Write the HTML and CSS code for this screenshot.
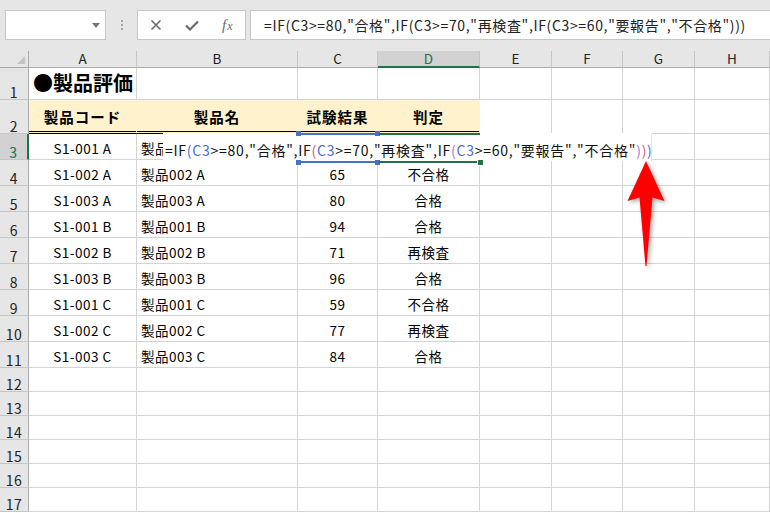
FILE: index.html
```html
<!DOCTYPE html>
<html lang="ja">
<head>
<meta charset="utf-8">
<title>製品評価</title>
<link rel="stylesheet" href="styles.css">
</head>
<body>
<div class="app">
  <div class="toolbar">
    <div class="namebox"><span class="dd"></span></div>
    <div class="grip"><i></i><i></i><i></i></div>
    <div class="fxbox">
      <svg class="ic-x" width="12" height="12" viewBox="0 0 12 12"><path d="M1.5 1.5 L10.5 10.5 M10.5 1.5 L1.5 10.5" stroke="#6b6b6b" stroke-width="1.6" fill="none"/></svg>
      <svg class="ic-ok" width="14" height="11" viewBox="0 0 14 11"><path d="M1 5.5 L5 9.5 L13 1.5" stroke="#6b6b6b" stroke-width="2.2" fill="none"/></svg>
      <span class="fx"><i>f</i><i class="fxx">x</i></span>
    </div>
    <div class="formula">=IF(C3&gt;=80,"合格",IF(C3&gt;=70,"再検査",IF(C3&gt;=60,"要報告","不合格")))</div>
  </div>

  <div class="sheet">
    <div class="corner"><span class="tri"></span></div>
    <div class="ch">A</div><div class="ch">B</div><div class="ch">C</div><div class="ch sel">D</div><div class="ch">E</div><div class="ch">F</div><div class="ch">G</div><div class="ch">H</div>

    <div class="rh">1</div><div class="c title">●製品評価</div><div class="c"></div><div class="c"></div><div class="c"></div><div class="c"></div><div class="c"></div><div class="c"></div><div class="c"></div>

    <div class="rh">2</div><div class="c hd dbl">製品コード</div><div class="c hd dbl">製品名</div><div class="c hd dbl">試験結果</div><div class="c hd dbl">判定</div><div class="c"></div><div class="c"></div><div class="c"></div><div class="c"></div>

    <div class="rh sel">3</div><div class="c ctr">S1-001 A</div><div class="c clip">製品001 A</div><div class="c ctr"></div><div class="c ctr"></div><div class="c"></div><div class="c"></div><div class="c"></div><div class="c"></div>

    <div class="rh">4</div><div class="c ctr">S1-002 A</div><div class="c">製品002 A</div><div class="c ctr">65</div><div class="c ctr">不合格</div><div class="c"></div><div class="c"></div><div class="c"></div><div class="c"></div>
    <div class="rh">5</div><div class="c ctr">S1-003 A</div><div class="c">製品003 A</div><div class="c ctr">80</div><div class="c ctr">合格</div><div class="c"></div><div class="c"></div><div class="c"></div><div class="c"></div>
    <div class="rh">6</div><div class="c ctr">S1-001 B</div><div class="c">製品001 B</div><div class="c ctr">94</div><div class="c ctr">合格</div><div class="c"></div><div class="c"></div><div class="c"></div><div class="c"></div>
    <div class="rh">7</div><div class="c ctr">S1-002 B</div><div class="c">製品002 B</div><div class="c ctr">71</div><div class="c ctr">再検査</div><div class="c"></div><div class="c"></div><div class="c"></div><div class="c"></div>
    <div class="rh">8</div><div class="c ctr">S1-003 B</div><div class="c">製品003 B</div><div class="c ctr">96</div><div class="c ctr">合格</div><div class="c"></div><div class="c"></div><div class="c"></div><div class="c"></div>
    <div class="rh">9</div><div class="c ctr">S1-001 C</div><div class="c">製品001 C</div><div class="c ctr">59</div><div class="c ctr">不合格</div><div class="c"></div><div class="c"></div><div class="c"></div><div class="c"></div>
    <div class="rh">10</div><div class="c ctr">S1-002 C</div><div class="c">製品002 C</div><div class="c ctr">77</div><div class="c ctr">再検査</div><div class="c"></div><div class="c"></div><div class="c"></div><div class="c"></div>
    <div class="rh">11</div><div class="c ctr">S1-003 C</div><div class="c">製品003 C</div><div class="c ctr">84</div><div class="c ctr">合格</div><div class="c"></div><div class="c"></div><div class="c"></div><div class="c"></div>

    <div class="rh">12</div><div class="c"></div><div class="c"></div><div class="c"></div><div class="c"></div><div class="c"></div><div class="c"></div><div class="c"></div><div class="c"></div>
    <div class="rh">13</div><div class="c"></div><div class="c"></div><div class="c"></div><div class="c"></div><div class="c"></div><div class="c"></div><div class="c"></div><div class="c"></div>
    <div class="rh">14</div><div class="c"></div><div class="c"></div><div class="c"></div><div class="c"></div><div class="c"></div><div class="c"></div><div class="c"></div><div class="c"></div>
    <div class="rh">15</div><div class="c"></div><div class="c"></div><div class="c"></div><div class="c"></div><div class="c"></div><div class="c"></div><div class="c"></div><div class="c"></div>
    <div class="rh">16</div><div class="c"></div><div class="c"></div><div class="c"></div><div class="c"></div><div class="c"></div><div class="c"></div><div class="c"></div><div class="c"></div>
    <div class="rh">17</div><div class="c"></div><div class="c"></div><div class="c"></div><div class="c"></div><div class="c"></div><div class="c"></div><div class="c"></div><div class="c"></div>

    <div class="edit">=IF<span class="p1">(</span><span class="rf">C3</span>&gt;=80,"合格",IF<span class="p2">(</span><span class="rf">C3</span>&gt;=70,"再検査",IF<span class="p3">(</span><span class="rf">C3</span>&gt;=60,"要報告","不合格"<span class="p3">)</span><span class="p2">)</span><span class="p1">)</span></div>
    <div class="refbox"><i class="tl"></i><i class="tr"></i><i class="bl"></i><i class="br"></i></div>
    <div class="actbox"><i class="fh"></i></div>

    <svg class="arrow" width="60" height="120" viewBox="0 0 60 120">
      <path d="M26 5 L44.5 45 L32.5 41.5 L26.5 110 L25.5 110 L19.5 41.5 L7.5 45 Z" fill="#ff0000"/>
    </svg>
  </div>
</div>
</body>
</html>
```

FILE: styles.css
```css
* { box-sizing: border-box; }

body {
  margin: 0;
  background: #ffffff;
  font-family: "Noto Sans CJK JP", sans-serif;
  color: #000;
  overflow: hidden;
}

.app {
  width: 770px;
  height: 513px;
  overflow: hidden;
  position: relative;
}

/* ---------- formula bar ---------- */
.toolbar {
  height: 51px;
  background: #e6e6e6;
  display: flex;
  align-items: flex-start;
  padding: 10px 0 0 5px;
}

.namebox {
  width: 101px;
  height: 30px;
  background: #fff;
  border: 1px solid #c6c6c6;
  display: flex;
  align-items: center;
  justify-content: flex-end;
  padding-right: 5px;
}

.dd {
  width: 0;
  height: 0;
  border-left: 4px solid transparent;
  border-right: 4px solid transparent;
  border-top: 5px solid #767676;
}

.grip {
  width: 31px;
  height: 30px;
  display: flex;
  flex-direction: column;
  align-items: center;
  justify-content: center;
  gap: 2px;
}

.grip i {
  width: 2px;
  height: 2px;
  background: #a4a4a4;
}

.fxbox {
  width: 109px;
  height: 30px;
  background: #fff;
  border: 1px solid #c6c6c6;
  display: flex;
  align-items: center;
  padding-left: 12px;
}

.ic-x { margin-right: 23px; }
.ic-ok { margin-right: 23px; }

.fx {
  font-family: "Liberation Serif", serif;
  font-style: italic;
  font-size: 15px;
  color: #6b6b6b;
  line-height: 1;
  display: flex;
  align-items: baseline;
}

.fx i { font-style: italic; }
.fxx { font-size: 12px; margin-left: 1px; }

.formula {
  flex: 1;
  margin-left: 4px;
  height: 30px;
  background: #fff;
  border: 1px solid #c6c6c6;
  border-right: none;
  padding-left: 13px;
  font-size: 14px;
  letter-spacing: 0.65px;
  line-height: 28px;
  white-space: nowrap;
  color: #222;
}

/* ---------- sheet ---------- */
.sheet {
  position: relative;
  display: grid;
  grid-template-columns: 29px 108px 161px 80px 102px 72px 71px 72px 75px;
  grid-template-rows: 17px 32px 34px 26px repeat(8, 26px) repeat(6, 24px);
}

.corner {
  background: #e6e6e6;
  border-right: 1px solid #ababab;
  border-bottom: 1px solid #ababab;
  display: flex;
  align-items: flex-end;
  justify-content: flex-end;
  padding: 0 3px 3px 0;
}

.tri {
  width: 0;
  height: 0;
  border-left: 8px solid transparent;
  border-bottom: 8px solid #c3c3c3;
}

.ch {
  background: #e6e6e6;
  border-right: 1px solid #c6c6c6;
  border-bottom: 1px solid #ababab;
  display: flex;
  align-items: center;
  justify-content: center;
  font-size: 13.5px;
  line-height: 1;
  color: #222;
}

.ch.sel {
  background: #d2d2d2;
  color: #217346;
  border-bottom: 2px solid #217346;
}

.rh {
  background: #e6e6e6;
  border-right: 1px solid #ababab;
  border-bottom: 1px solid #c6c6c6;
  display: flex;
  align-items: flex-end;
  justify-content: center;
  font-size: 14px;
  letter-spacing: 0.5px;
  line-height: 1;
  color: #222;
}

.rh.sel {
  background: #d2d2d2;
  color: #217346;
  border-right: 2px solid #217346;
}

.c {
  border-right: 1px solid #d4d4d4;
  border-bottom: 1px solid #d4d4d4;
  display: flex;
  align-items: flex-end;
  padding: 0 4px 4px;
  font-size: 13.5px;
  letter-spacing: 0.5px;
  line-height: 1;
  white-space: nowrap;
}

.ctr { justify-content: center; }
.clip { overflow: hidden; }

.title {
  font-size: 20px;
  letter-spacing: 0;
  font-weight: bold;
  padding-bottom: 6px;
}

.hd {
  background: #fff2cc;
  border-right-color: #fff2cc;
  font-weight: bold;
  font-size: 14.5px;
  letter-spacing: 1px;
  justify-content: center;
  padding-bottom: 7px;
}

.dbl { border-bottom: 3px double #000; }

/* ---------- in-cell edit & selection overlays ---------- */
.edit {
  position: absolute;
  left: 163px;
  top: 82px;
  width: 489px;
  height: 28px;
  background: #fff;
  border-right: 1px solid #e4e4e4;
  display: flex;
  align-items: flex-end;
  padding: 0 0 4px 2px;
  font-size: 14px;
  letter-spacing: 0.75px;
  line-height: 1;
  white-space: nowrap;
  color: #111;
  z-index: 2;
}

.rf { color: #4a6fd0; }
.p1 { color: #4a6fd0; }
.p2 { color: #e0587e; }
.p3 { color: #9a7ee0; }

.refbox {
  position: absolute;
  left: 297px;
  top: 82px;
  width: 82px;
  height: 30px;
  border-top: 2px solid #4472c4;
  border-bottom: 2px solid #4472c4;
  z-index: 3;
}

.refbox i {
  position: absolute;
  width: 5px;
  height: 5px;
  background: #4472c4;
}
.refbox .tl { left: -1px; top: -4px; }
.refbox .tr { right: -1px; top: -4px; }
.refbox .bl { left: -1px; bottom: -4px; }
.refbox .br { right: -1px; bottom: -4px; }

.actbox {
  position: absolute;
  left: 379px;
  top: 82px;
  width: 101px;
  height: 30px;
  border-top: 2px solid #217346;
  border-bottom: 2px solid #217346;
  z-index: 3;
}

.actbox .fh {
  position: absolute;
  right: -4px;
  bottom: -5px;
  width: 7px;
  height: 7px;
  background: #217346;
  border: 1px solid #fff;
}

.arrow {
  position: absolute;
  left: 620px;
  top: 105px;
  z-index: 4;
  filter: drop-shadow(2px 2px 2px rgba(0, 0, 0, 0.35));
}
```
